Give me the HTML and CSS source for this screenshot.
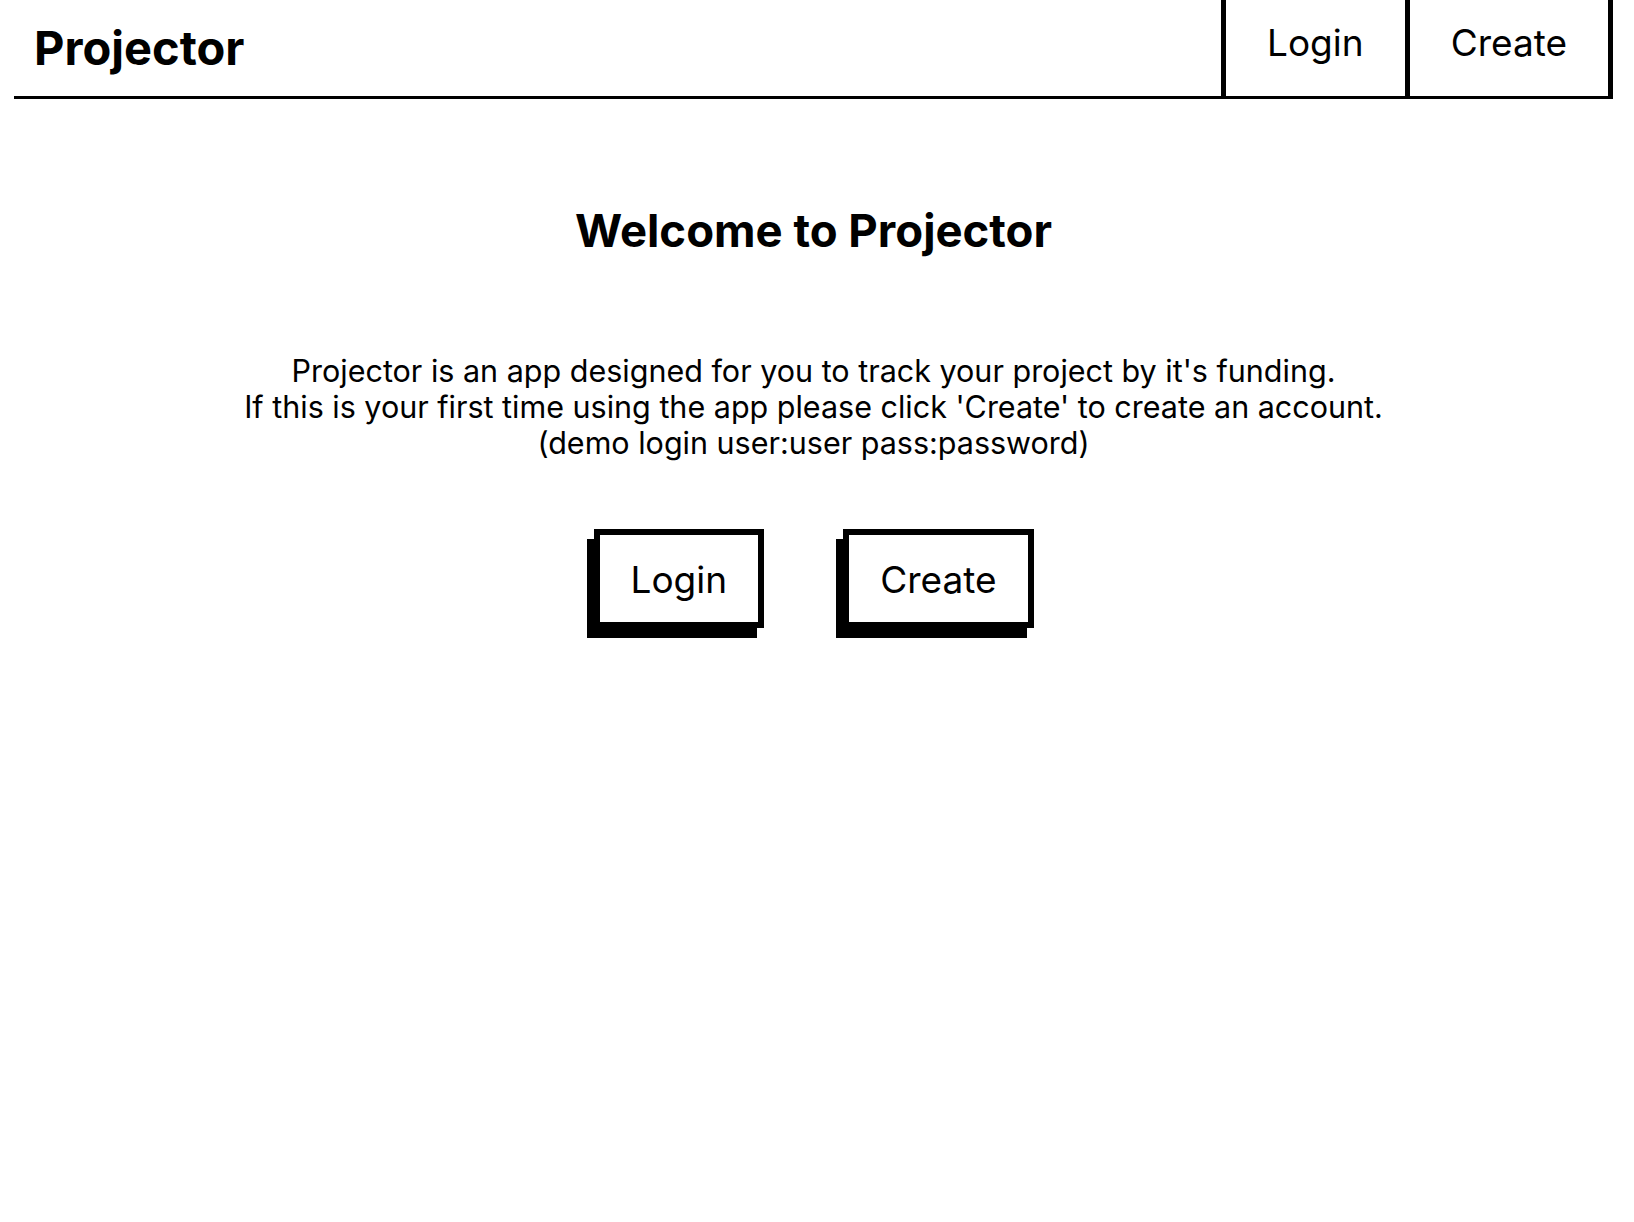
FILE: index.html
```html
<!DOCTYPE html>
<html lang="en">
<head>
<meta charset="utf-8">
<title>Projector</title>
<link rel="stylesheet" href="styles.css">
</head>
<body>
<div class="page">
  <header class="topbar">
    <h1 class="brand">Projector</h1>
    <nav class="nav">
      <a class="nav-link" href="#">Login</a>
      <a class="nav-link nav-link-last" href="#">Create</a>
    </nav>
  </header>
  <main class="welcome">
    <h2 class="welcome-title">Welcome to Projector</h2>
    <p class="welcome-text">Projector is an app designed for you to track your project by it's funding.<br>If this is your first time using the app please click 'Create' to create an account.<br>(demo login user:user pass:password)</p>
    <div class="actions">
      <a class="btn" href="#">Login</a>
      <a class="btn" href="#">Create</a>
    </div>
  </main>
</div>
</body>
</html>
```
FILE: styles.css
```css
* { box-sizing: border-box; }
html, body { margin: 0; padding: 0; background: #fff; }
body {
  font-family: Inter, "Noto Sans", sans-serif;
  color: #000;
}
.page {
  margin: 0 21px 0 14px;
}
.topbar {
  display: flex;
  justify-content: space-between;
  align-items: stretch;
  height: 99px;
  border-bottom: 3px solid #000;
}
.brand {
  margin: 0;
  padding: 19px 0 0 20px;
  font-size: 47px;
  font-weight: 700;
  line-height: 57px;
}
.nav {
  display: flex;
  align-items: stretch;
}
.nav-link {
  display: block;
  padding: 20px 41px 0 41px;
  font-size: 37px;
  line-height: 45px;
  color: #000;
  text-decoration: none;
  border-left: 5px solid #000;
}
.nav-link-last {
  border-right: 5px solid #000;
}
.welcome {
  text-align: center;
  padding-bottom: 60px;
}
.welcome-title {
  margin: 104px 0 0;
  font-size: 45.5px;
  font-weight: 700;
  line-height: 55px;
}
.welcome-text {
  margin: 95px 0 0;
  font-size: 30.5px;
  line-height: 36px;
  font-weight: 400;
}
.actions {
  display: flex;
  justify-content: center;
  gap: 79px;
  margin-top: 68px;
}
.btn {
  display: block;
  padding: 22px 31px 20px;
  border: 6px solid #000;
  box-shadow: -7px 10px 0 0 #000;
  font-size: 37px;
  line-height: 45px;
  color: #000;
  text-decoration: none;
  background: #fff;
}
```
